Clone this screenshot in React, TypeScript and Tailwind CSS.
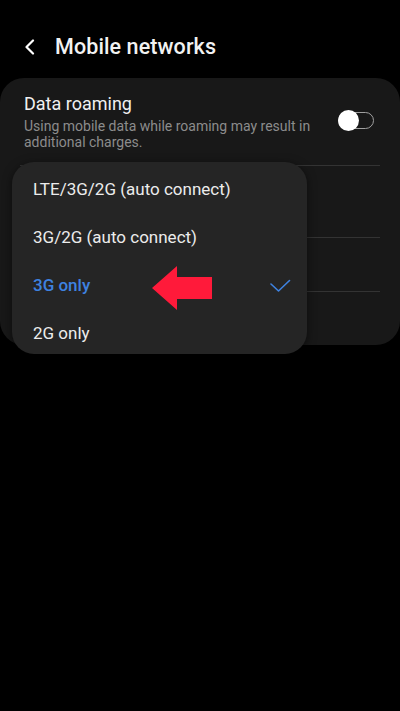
import React from "react"

const options = [
  { label: "LTE/3G/2G (auto connect)", selected: false },
  { label: "3G/2G (auto connect)", selected: false },
  { label: "3G only", selected: true },
  { label: "2G only", selected: false },
]

export default function App() {
  return (
    <div className="min-h-[711px] w-[400px] bg-black pt-[23px] font-['Roboto','Liberation_Sans',sans-serif] text-white">
      {/* Header */}
      <div className="flex h-[48px] items-center">
        <svg width="12" height="16" viewBox="0 0 12 16" className="ml-[24px]">
          <polyline points="9,1.5 2.5,8 9,14.5" fill="none" stroke="#fff" strokeWidth="2.2" strokeLinecap="round" strokeLinejoin="round" />
        </svg>
        <h1 className="ml-[19px] text-[21.5px] font-medium tracking-[0.1px] text-[#f2f2f2]">Mobile networks</h1>
      </div>

      {/* Settings card */}
      <div className="relative mt-[7px] rounded-[24px] bg-[#181818]">
        <div className="flex h-[87px] items-start pl-[24px] pr-[26px] pt-[15px]">
          <div className="flex-1">
            <div className="text-[18px] leading-[22px] text-[#f0f0f0]">Data roaming</div>
            <div className="mt-[3px] text-[14px] leading-[16px] text-[#8c8c8c]">
              Using mobile data while roaming may result in additional charges.
            </div>
          </div>
          <div className="relative mt-[19px] ml-[16px] h-[17px] w-[36px] shrink-0 rounded-full border-[1.5px] border-[#a0a0a0]">
            <div className="absolute left-[-1.5px] top-[-3.5px] h-[21px] w-[21px] rounded-full bg-white" />
          </div>
        </div>
        <div className="mx-[20px] border-t border-[#333]" />
        <div className="h-[71px]" />
        <div className="mx-[20px] border-t border-[#333]" />
        <div className="h-[53px]" />
        <div className="mx-[20px] border-t border-[#333]" />
        <div className="h-[53px]" />

        {/* Dropdown popup */}
        <div className="absolute left-[12px] top-[84px] z-10 h-[192px] w-[295px] overflow-hidden rounded-[22px] bg-[#252525] pt-[4px] shadow-[0_2px_10px_rgba(0,0,0,0.55)]">
          {options.map((o) => (
            <div key={o.label} className="flex h-[48px] items-center justify-between pl-[21px] pr-[16px]">
              <span
                className={
                  o.selected
                    ? "text-[17px] font-medium text-[#3e82e0]"
                    : "text-[17px] text-[#ececec]"
                }
              >
                {o.label}
              </span>
              {o.selected && (
                <svg width="21" height="14" viewBox="0 0 21 14">
                  <polyline points="1,5 8.5,12 19.5,1.5" fill="none" stroke="#3e82e0" strokeWidth="1.6" strokeLinecap="round" strokeLinejoin="round" />
                </svg>
              )}
            </div>
          ))}

          {/* Red pointer arrow */}
          <svg width="61" height="45" viewBox="0 0 61 45" className="absolute left-[140px] top-[104px]">
            <polygon points="0,22 25,0 25,11 60,11 60,33 25,33 25,44" fill="#ff1a3a" />
          </svg>
        </div>
      </div>
    </div>
  )
}
